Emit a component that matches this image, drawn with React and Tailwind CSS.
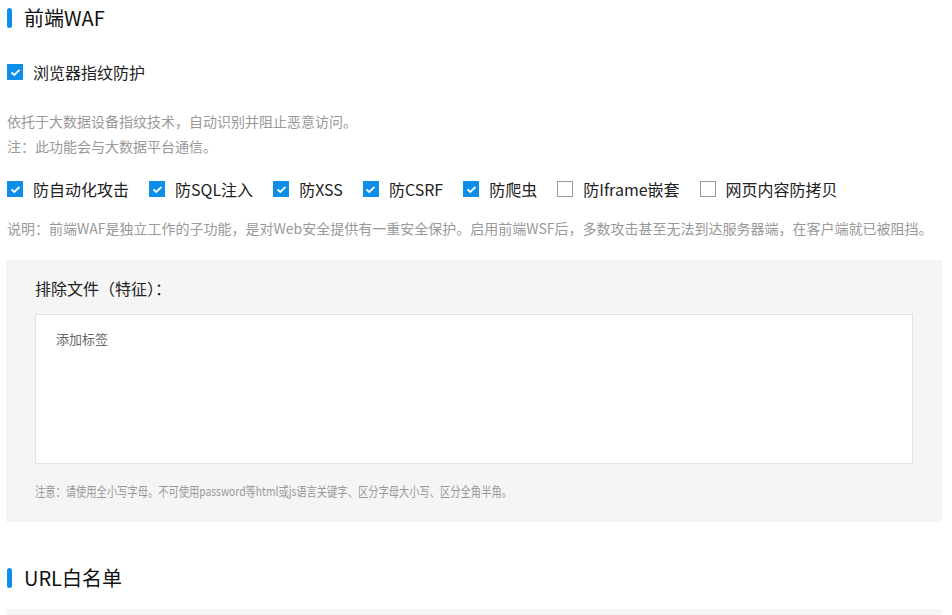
const font = {
  fontFamily: '"Microsoft YaHei", "Noto Sans CJK SC", "Noto Sans", sans-serif',
};

const Check = ({ checked, label }) => (
  <label className="flex items-center h-[20px] text-[16px] text-[#222]">
    {checked ? (
      <span className="w-[16px] h-[16px] bg-[#0d8fe9] flex items-center justify-center">
        <svg width="11" height="9" viewBox="0 0 11 9" fill="none">
          <path d="M1.5 4.5 L4.3 7 L9.5 1.8" stroke="#fff" strokeWidth="1.8" />
        </svg>
      </span>
    ) : (
      <span className="w-[16px] h-[16px] border border-[#9a9a9a] bg-white" />
    )}
    <span className="ml-[10px]">{label}</span>
  </label>
);

const Heading = ({ children }) => (
  <div className="flex items-center h-[36px] ml-px">
    <span className="w-[5px] h-[20px] rounded-full bg-[#0d8fe9]" />
    <span className="ml-[12px] text-[20px] text-[#111]">{children}</span>
  </div>
);

const options = [
  { label: "防自动化攻击", checked: true },
  { label: "防SQL注入", checked: true },
  { label: "防XSS", checked: true },
  { label: "防CSRF", checked: true },
  { label: "防爬虫", checked: true },
  { label: "防Iframe嵌套", checked: false },
  { label: "网页内容防拷贝", checked: false },
];

export default function App() {
  return (
    <div className="w-[952px] h-[615px] overflow-hidden bg-white pl-[6px]" style={font}>
      <Heading>前端WAF</Heading>

      <div className="mt-[26px] ml-px">
        <Check checked label="浏览器指纹防护" />
      </div>

      <div className="mt-[27px] ml-px text-[14px] leading-[25px] text-[#999]">
        <p>依托于大数据设备指纹技术，自动识别并阻止恶意访问。</p>
        <p>注：此功能会与大数据平台通信。</p>
      </div>

      <div className="mt-[20px] ml-px flex gap-[20px]">
        {options.map((o) => (
          <Check key={o.label} checked={o.checked} label={o.label} />
        ))}
      </div>

      <p className="mt-[19px] ml-px text-[14px] leading-[20px] text-[#999] whitespace-nowrap">
        说明：前端WAF是独立工作的子功能，是对Web安全提供有一重安全保护。启用前端WSF后，多数攻击甚至无法到达服务器端，在客户端就已被阻挡。
      </p>

      <div className="mt-[22px] w-[936px] h-[262px] bg-[#f5f5f5] pt-[18px] px-[29px]">
        <p className="text-[16px] leading-[20px] text-[#222]">排除文件（特征）：</p>
        <div className="mt-[16px] h-[150px] bg-white border border-[#e2e2e2] pl-[20px] pt-[10px]">
          <span className="text-[13px] leading-[20px] text-[#666]">添加标签</span>
        </div>
        <p className="mt-[17px] text-[13px] leading-[20px] text-[#999] whitespace-nowrap origin-left scale-x-[0.79]">
          注意：请使用全小写字母。不可使用password等html或js语言关键字、区分字母大小写、区分全角半角。
        </p>
      </div>

      <div className="mt-[38px]">
        <Heading>URL白名单</Heading>
      </div>

      <div className="mt-[13px] w-[936px] h-[40px] bg-[#f5f5f5]" />
    </div>
  );
}
